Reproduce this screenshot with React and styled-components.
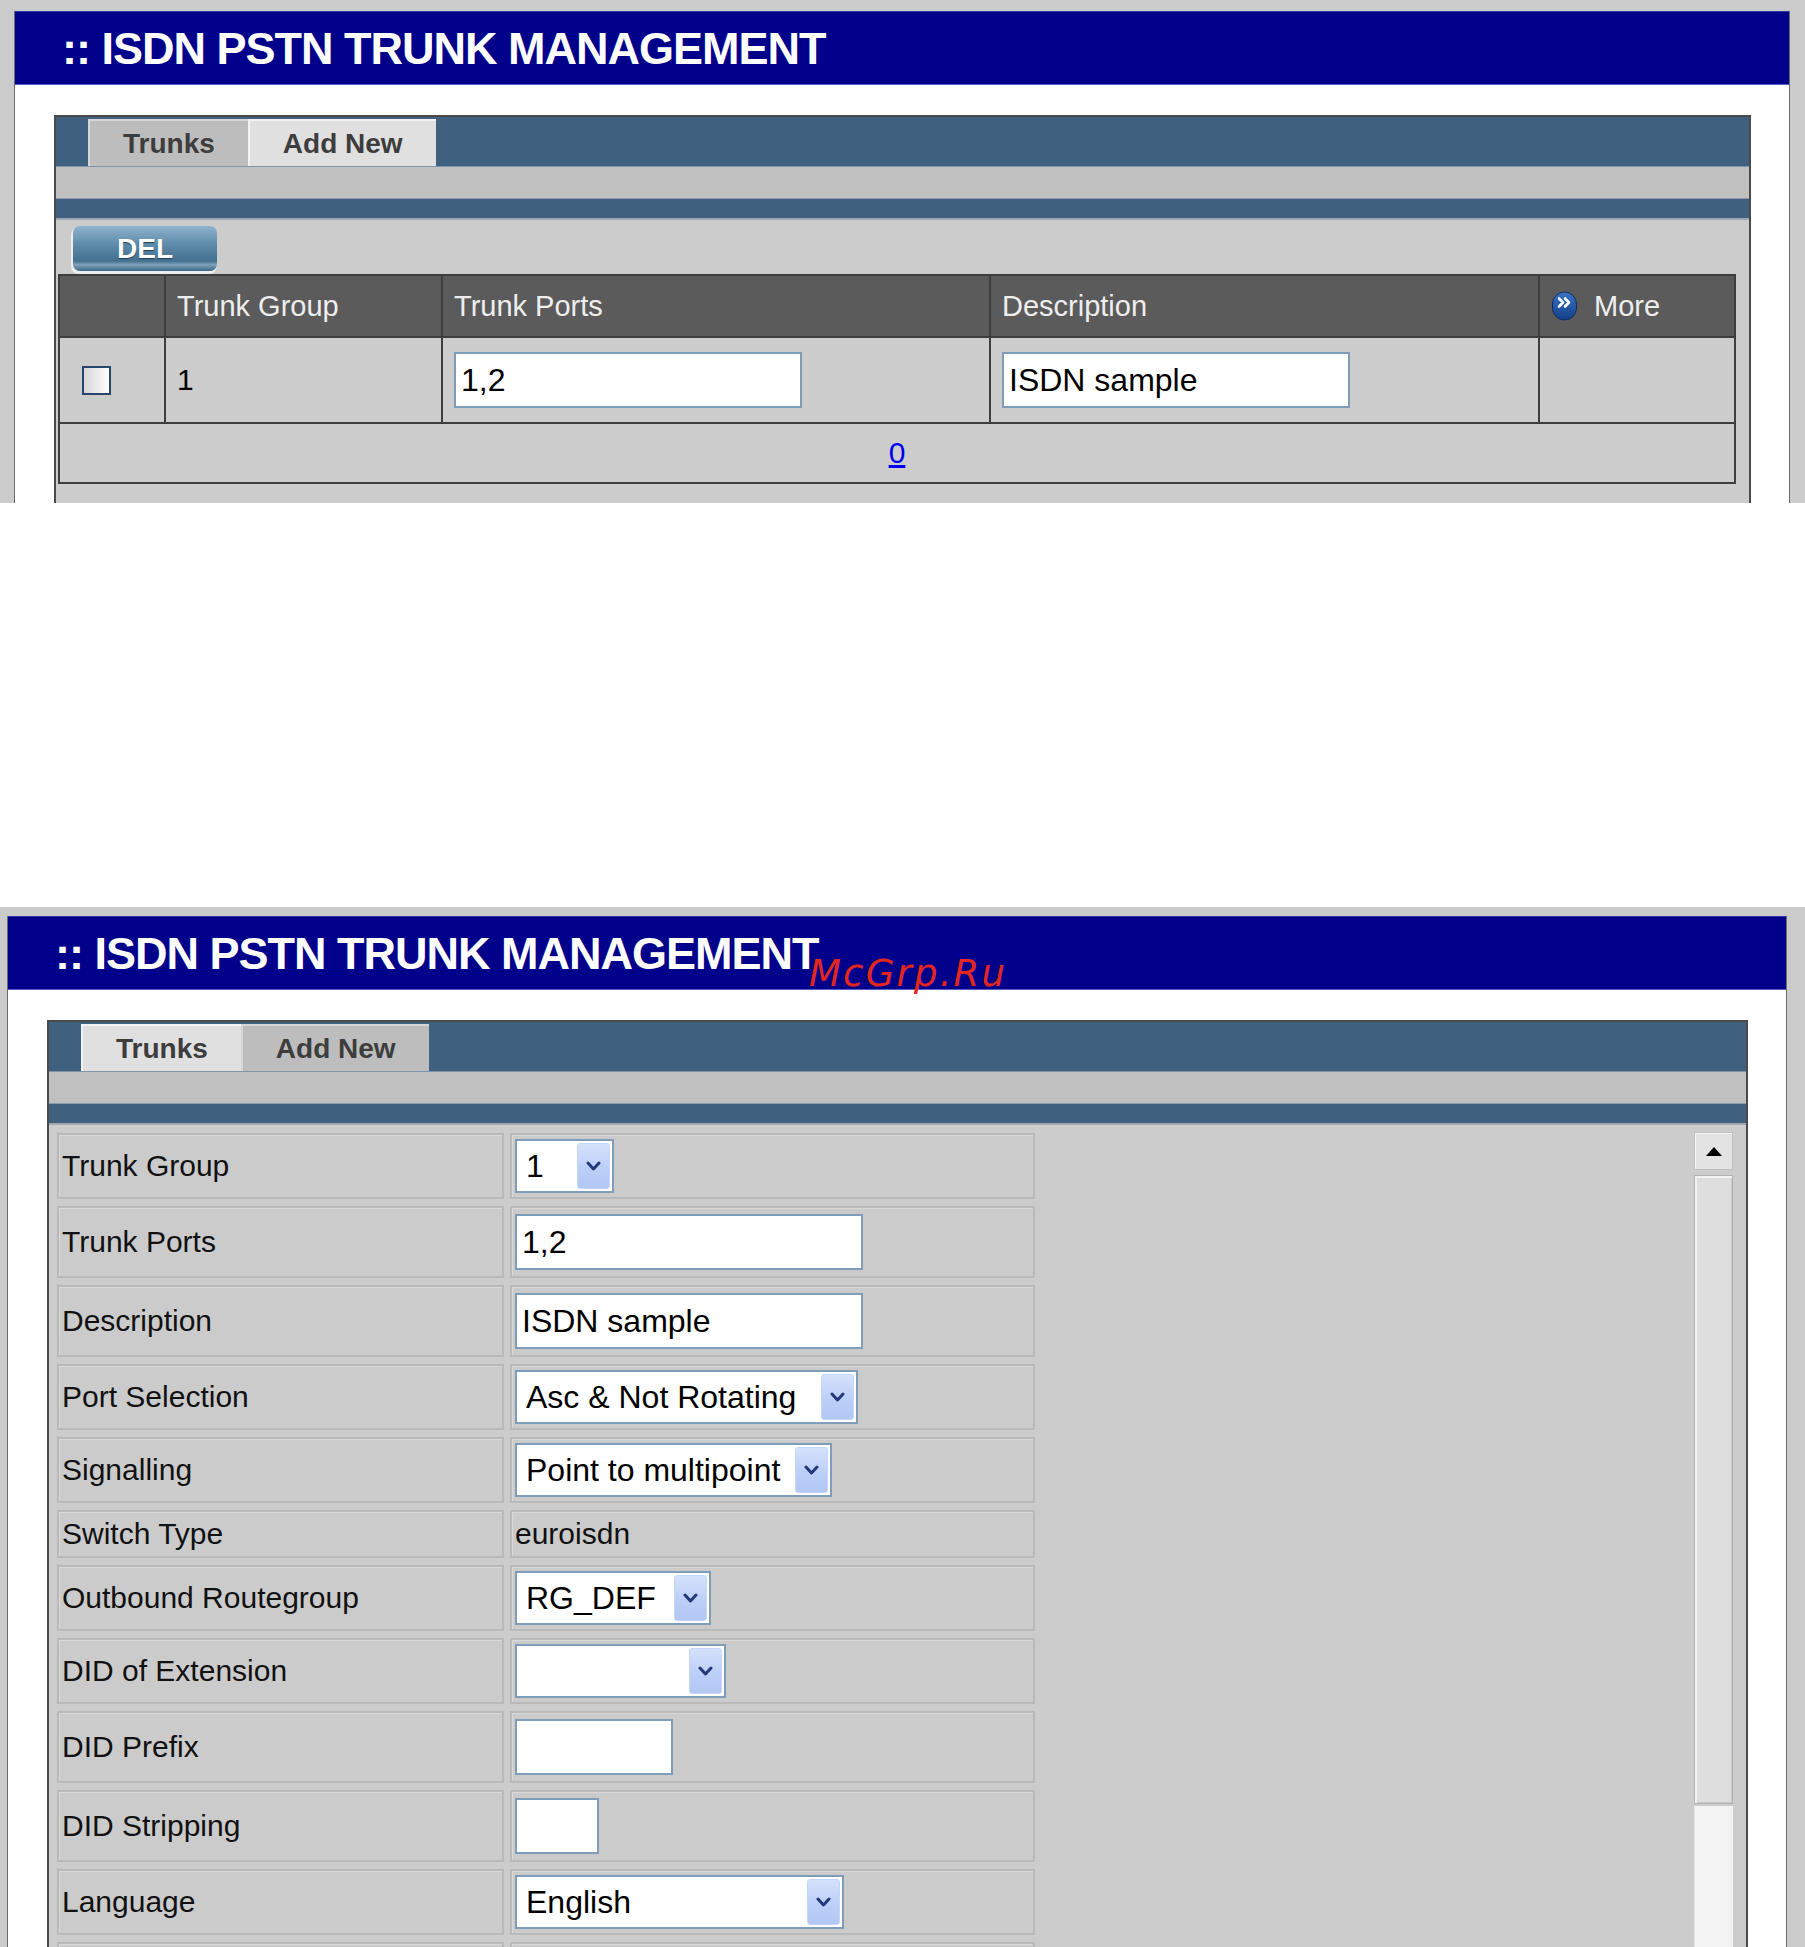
import React from 'react';
import styled, { createGlobalStyle } from 'styled-components';

const GlobalStyle = createGlobalStyle`
  html, body { margin: 0; padding: 0; background: #ffffff; }
  body { font-family: "Liberation Sans", Arial, sans-serif; }
`;

const Page = styled.div`
  width: 1805px;
  height: 1947px;
  overflow: hidden;
  display: flex;
  flex-direction: column;
  background: #ffffff;
`;

const Shot = styled.section`
  position: relative;
  flex: none;
  box-sizing: border-box;
  height: ${(p) => p.$height}px;
  margin-top: ${(p) => p.$top}px;
  padding: ${(p) => p.$padTop}px ${(p) => p.$padRight}px 0 ${(p) => p.$padLeft}px;
  background: #cbcbcb;
  overflow: hidden;
  display: flex;
  flex-direction: column;
`;

const Window = styled.div`
  flex: 1;
  display: flex;
  flex-direction: column;
  background: #ffffff;
  border-left: 1px solid #6c6c6c;
  border-right: 1px solid #6c6c6c;
`;

const TitleBar = styled.h1`
  margin: 0;
  flex: none;
  height: 74px;
  box-sizing: border-box;
  display: flex;
  align-items: center;
  padding-left: 47px;
  background: #00008b;
  border-top: 1px solid #3434a6;
  border-bottom: 1px solid #5b5bc6;
  color: #ffffff;
  font: bold 45px/1 "Liberation Sans", Arial, sans-serif;
  letter-spacing: -1px;
  white-space: nowrap;
`;

const WindowBody = styled.div`
  flex: 1;
  display: flex;
  flex-direction: column;
  padding: 30px 38px 0 39px;
`;

const TabPanel = styled.div`
  flex: 1;
  display: flex;
  flex-direction: column;
  background: #cccccc;
  border: 2px solid #4a4a4a;
  border-bottom: none;
`;

const TabStrip = styled.div`
  flex: none;
  height: 49px;
  box-sizing: border-box;
  display: flex;
  align-items: flex-end;
  padding-left: 32px;
  background: #3f607f;
`;

const Tab = styled.div`
  height: 47px;
  box-sizing: border-box;
  display: flex;
  align-items: center;
  padding: 0 33px;
  background: ${(p) => (p.$active ? '#bdbdbd' : '#e0e0e0')};
  border-top: 2px solid ${(p) => (p.$active ? '#d6d6d6' : '#f3f3f3')};
  border-left: 2px solid ${(p) => (p.$active ? '#d6d6d6' : '#f3f3f3')};
  color: #3d3d3d;
  font: bold 28px/1 "Liberation Sans", Arial, sans-serif;
  white-space: nowrap;
`;

const GreyBand = styled.div`
  flex: none;
  height: 32px;
  box-sizing: border-box;
  background: #c0c0c0;
  border-top: 1px solid #7f95aa;
`;

const SteelBand = styled.div`
  flex: none;
  height: 22px;
  box-sizing: border-box;
  background: #3f607f;
  border-top: 1px solid #8d9cab;
  border-bottom: 2px solid #9ea7b0;
`;

/* ---------- trunk list ---------- */

const ListArea = styled.div`
  padding: 6px 14px 0 2px;
  display: flex;
  flex-direction: column;
  align-items: flex-start;
`;

const DelButton = styled.button`
  margin-left: 15px;
  width: 144px;
  height: 45px;
  border: none;
  border-radius: 7px;
  background: linear-gradient(
    180deg,
    #8fb3cd 0%,
    #5f8cab 40%,
    #44708f 78%,
    #7fa2bb 86%,
    #3b6686 100%
  );
  box-shadow: -1px 2px 0 1px #ededed;
  color: #ffffff;
  font: bold 28px/1 "Liberation Sans", Arial, sans-serif;
  text-shadow: 0 1px 1px #1f3b52;
  padding: 0;
`;

const TrunkTable = styled.table`
  margin-top: 3px;
  width: 1676px;
  table-layout: fixed;
  border-collapse: collapse;
  border: 2px solid #3e3e3e;
`;

const Col = styled.col`
  width: ${(p) => p.$w}px;
`;

const HeadCell = styled.th`
  height: 60px;
  padding: 0 11px;
  background: #5b5b5b;
  border: 2px solid #3e3e3e;
  color: #eeeeee;
  font: normal 29px/1 "Liberation Sans", Arial, sans-serif;
  text-align: left;
  white-space: nowrap;
`;

const MoreLabel = styled.span`
  display: flex;
  align-items: center;
  gap: 16px;
`;

const BodyCell = styled.td`
  height: 84px;
  padding: 0 ${(p) => (p.$pad != null ? p.$pad : 11)}px;
  background: #cccccc;
  border: 2px solid #3e3e3e;
  color: #000000;
  font: normal 30px/1 "Liberation Sans", Arial, sans-serif;
  vertical-align: middle;
`;

const FooterCell = styled.td`
  height: 56px;
  background: #cccccc;
  border: 2px solid #3e3e3e;
  text-align: center;
  vertical-align: middle;
`;

const PageLink = styled.a`
  color: #0000ee;
  text-decoration: underline;
  font: normal 30px/1 "Liberation Sans", Arial, sans-serif;
`;

const Check = styled.input`
  appearance: none;
  display: block;
  margin: 0 0 0 12px;
  width: 29px;
  height: 29px;
  box-sizing: border-box;
  border: 2px solid #26466c;
  background: linear-gradient(90deg, #d6d6d6 0%, #ffffff 100%);
`;

/* ---------- form controls ---------- */

const TextField = styled.input`
  display: block;
  width: ${(p) => p.$w}px;
  height: 56px;
  margin: 2px 0;
  box-sizing: border-box;
  border: 2px solid #7f9db9;
  padding: 0 5px;
  background: #ffffff;
  color: #000000;
  font: normal 32px/1 "Liberation Sans", Arial, sans-serif;
  outline: none;
`;

const SelectBox = styled.div`
  width: ${(p) => p.$w}px;
  height: 54px;
  box-sizing: border-box;
  display: flex;
  align-items: stretch;
  border: 2px solid #7f9db9;
  background: #ffffff;
  padding: 2px 2px 2px 9px;
  color: #000000;
  font: normal 32px/1 "Liberation Sans", Arial, sans-serif;
`;

const SelectText = styled.span`
  flex: 1;
  display: flex;
  align-items: center;
  white-space: nowrap;
  overflow: hidden;
`;

const DropButton = styled.span`
  flex: none;
  width: 33px;
  box-sizing: border-box;
  display: flex;
  align-items: center;
  justify-content: center;
  border-radius: 3px;
  border: 1px solid #c6d6fb;
  background: linear-gradient(180deg, #d6e2fd 0%, #bccff7 55%, #b2c7f3 100%);
`;

const Chevron = () => (
  <svg width="15" height="10" viewBox="0 0 15 10">
    <path d="M2 2 L7.5 8 L13 2" fill="none" stroke="#24397a" strokeWidth="3" strokeLinecap="round" strokeLinejoin="round" />
  </svg>
);

const Select = ({ w, value }) => (
  <SelectBox $w={w}>
    <SelectText>{value}</SelectText>
    <DropButton>
      <Chevron />
    </DropButton>
  </SelectBox>
);

/* ---------- edit form ---------- */

const FormArea = styled.div`
  flex: 1;
  display: flex;
  justify-content: space-between;
  align-items: stretch;
  padding: 7px 13px 0 8px;
`;

const FormRows = styled.div`
  margin-top: 1px;
  width: 978px;
  display: flex;
  flex-direction: column;
  gap: 7px;
`;

const FormRow = styled.div`
  display: grid;
  grid-template-columns: 447px 525px;
  column-gap: 6px;
`;

const Cell = styled.div`
  box-sizing: border-box;
  min-height: ${(p) => p.$min || 0}px;
  display: flex;
  align-items: center;
  padding: 4px 3px;
  border: 2px solid #b9b9b9;
  box-shadow: inset 1px 1px 0 #d9d9d9;
  background: #cbcbcb;
  color: #111111;
  font: normal 30px/36px "Liberation Sans", Arial, sans-serif;
  white-space: nowrap;
`;

const ScrollRail = styled.div`
  flex: none;
  width: 39px;
  display: flex;
  flex-direction: column;
`;

const ScrollArrow = styled.div`
  flex: none;
  height: 38px;
  box-sizing: border-box;
  display: flex;
  align-items: center;
  justify-content: center;
  background: #e3e3e3;
  border: 1px solid #c0c0c0;
  box-shadow: inset 1px 1px 0 #f7f7f7;
`;

const ScrollThumb = styled.div`
  flex: none;
  margin-top: 5px;
  height: 629px;
  box-sizing: border-box;
  background: #dedede;
  border: 1px solid #b3b3b3;
  box-shadow: inset 2px 2px 0 #f2f2f2, inset -1px -1px 0 #c9c9c9;
`;

const ScrollTrack = styled.div`
  flex: 1;
  margin-top: 2px;
  background: #f3f3f3;
  border-left: 1px solid #e6e6e6;
`;

const Watermark = styled.span`
  position: absolute;
  left: 809px;
  top: 48px;
  color: #e3261e;
  font: italic normal 37px/1 "DejaVu Sans", "Liberation Sans", sans-serif;
  letter-spacing: 2.2px;
  white-space: nowrap;
`;

const TabHeader = ({ active }) => (
  <>
    <TabStrip>
      <Tab $active={active === 'Trunks'}>Trunks</Tab>
      <Tab $active={active === 'Add New'}>Add New</Tab>
    </TabStrip>
    <GreyBand />
    <SteelBand />
  </>
);

const ManagerWindow = ({ active, children }) => (
  <Window>
    <TitleBar>:: ISDN PSTN TRUNK MANAGEMENT</TitleBar>
    <WindowBody>
      <TabPanel>
        <TabHeader active={active} />
        {children}
      </TabPanel>
    </WindowBody>
  </Window>
);

const MoreIcon = () => (
  <svg width="27" height="30" viewBox="0 0 27 30">
    <defs>
      <linearGradient id="moreFill" x1="0" y1="0" x2="0" y2="1">
        <stop offset="0" stopColor="#3b74c6" />
        <stop offset="1" stopColor="#123e86" />
      </linearGradient>
    </defs>
    <rect x="1.5" y="1" width="24" height="28" rx="12" fill="url(#moreFill)" stroke="#0d2d63" />
    <path
      d="M8 7.5 L12 11.5 L8 15.5 M14 7.5 L18 11.5 L14 15.5"
      fill="none"
      stroke="#ffffff"
      strokeWidth="2.6"
      strokeLinecap="round"
      strokeLinejoin="round"
    />
  </svg>
);

const UpArrow = () => (
  <svg width="16" height="9" viewBox="0 0 16 9">
    <path d="M8 0 L16 9 L0 9 Z" fill="#000000" />
  </svg>
);

const fields = [
  { label: 'Trunk Group', kind: 'select', w: 99, value: '1' },
  { label: 'Trunk Ports', kind: 'text', w: 348, value: '1,2' },
  { label: 'Description', kind: 'text', w: 348, value: 'ISDN sample' },
  { label: 'Port Selection', kind: 'select', w: 343, value: 'Asc & Not Rotating' },
  { label: 'Signalling', kind: 'select', w: 317, value: 'Point to multipoint' },
  { label: 'Switch Type', kind: 'plain', value: 'euroisdn' },
  { label: 'Outbound Routegroup', kind: 'select', w: 196, value: 'RG_DEF' },
  { label: 'DID of Extension', kind: 'select', w: 211, value: '' },
  { label: 'DID Prefix', kind: 'text', w: 158, value: '' },
  { label: 'DID Stripping', kind: 'text', w: 84, value: '' },
  { label: 'Language', kind: 'select', w: 329, value: 'English' },
];

const FieldValue = ({ field }) => {
  if (field.kind === 'select') return <Select w={field.w} value={field.value} />;
  if (field.kind === 'text') return <TextField $w={field.w} defaultValue={field.value} />;
  return field.value;
};

export default function App() {
  return (
    <>
      <GlobalStyle />
      <Page>
        <Shot $height={503} $top={0} $padTop={11} $padLeft={14} $padRight={15}>
          <ManagerWindow active="Trunks">
            <ListArea>
              <DelButton type="button">DEL</DelButton>
              <TrunkTable>
                <colgroup>
                  <Col $w={106} />
                  <Col $w={277} />
                  <Col $w={548} />
                  <Col $w={549} />
                  <Col $w={196} />
                </colgroup>
                <thead>
                  <tr>
                    <HeadCell />
                    <HeadCell>Trunk Group</HeadCell>
                    <HeadCell>Trunk Ports</HeadCell>
                    <HeadCell>Description</HeadCell>
                    <HeadCell>
                      <MoreLabel>
                        <MoreIcon />
                        More
                      </MoreLabel>
                    </HeadCell>
                  </tr>
                </thead>
                <tbody>
                  <tr>
                    <BodyCell $pad={10}>
                      <Check type="checkbox" />
                    </BodyCell>
                    <BodyCell>1</BodyCell>
                    <BodyCell>
                      <TextField $w={348} defaultValue="1,2" />
                    </BodyCell>
                    <BodyCell>
                      <TextField $w={348} defaultValue="ISDN sample" />
                    </BodyCell>
                    <BodyCell />
                  </tr>
                  <tr>
                    <FooterCell colSpan={5}>
                      <PageLink href="#">0</PageLink>
                    </FooterCell>
                  </tr>
                </tbody>
              </TrunkTable>
            </ListArea>
          </ManagerWindow>
        </Shot>

        <Shot $height={1040} $top={404} $padTop={9} $padLeft={7} $padRight={18}>
          <ManagerWindow active="Add New">
            <FormArea>
              <FormRows>
                {fields.map((f) => (
                  <FormRow key={f.label}>
                    <Cell>{f.label}</Cell>
                    <Cell>
                      <FieldValue field={f} />
                    </Cell>
                  </FormRow>
                ))}
                <FormRow>
                  <Cell $min={66} />
                  <Cell $min={66} />
                </FormRow>
              </FormRows>
              <ScrollRail>
                <ScrollArrow>
                  <UpArrow />
                </ScrollArrow>
                <ScrollThumb />
                <ScrollTrack />
              </ScrollRail>
            </FormArea>
          </ManagerWindow>
          <Watermark>McGrp.Ru</Watermark>
        </Shot>
      </Page>
    </>
  );
}
